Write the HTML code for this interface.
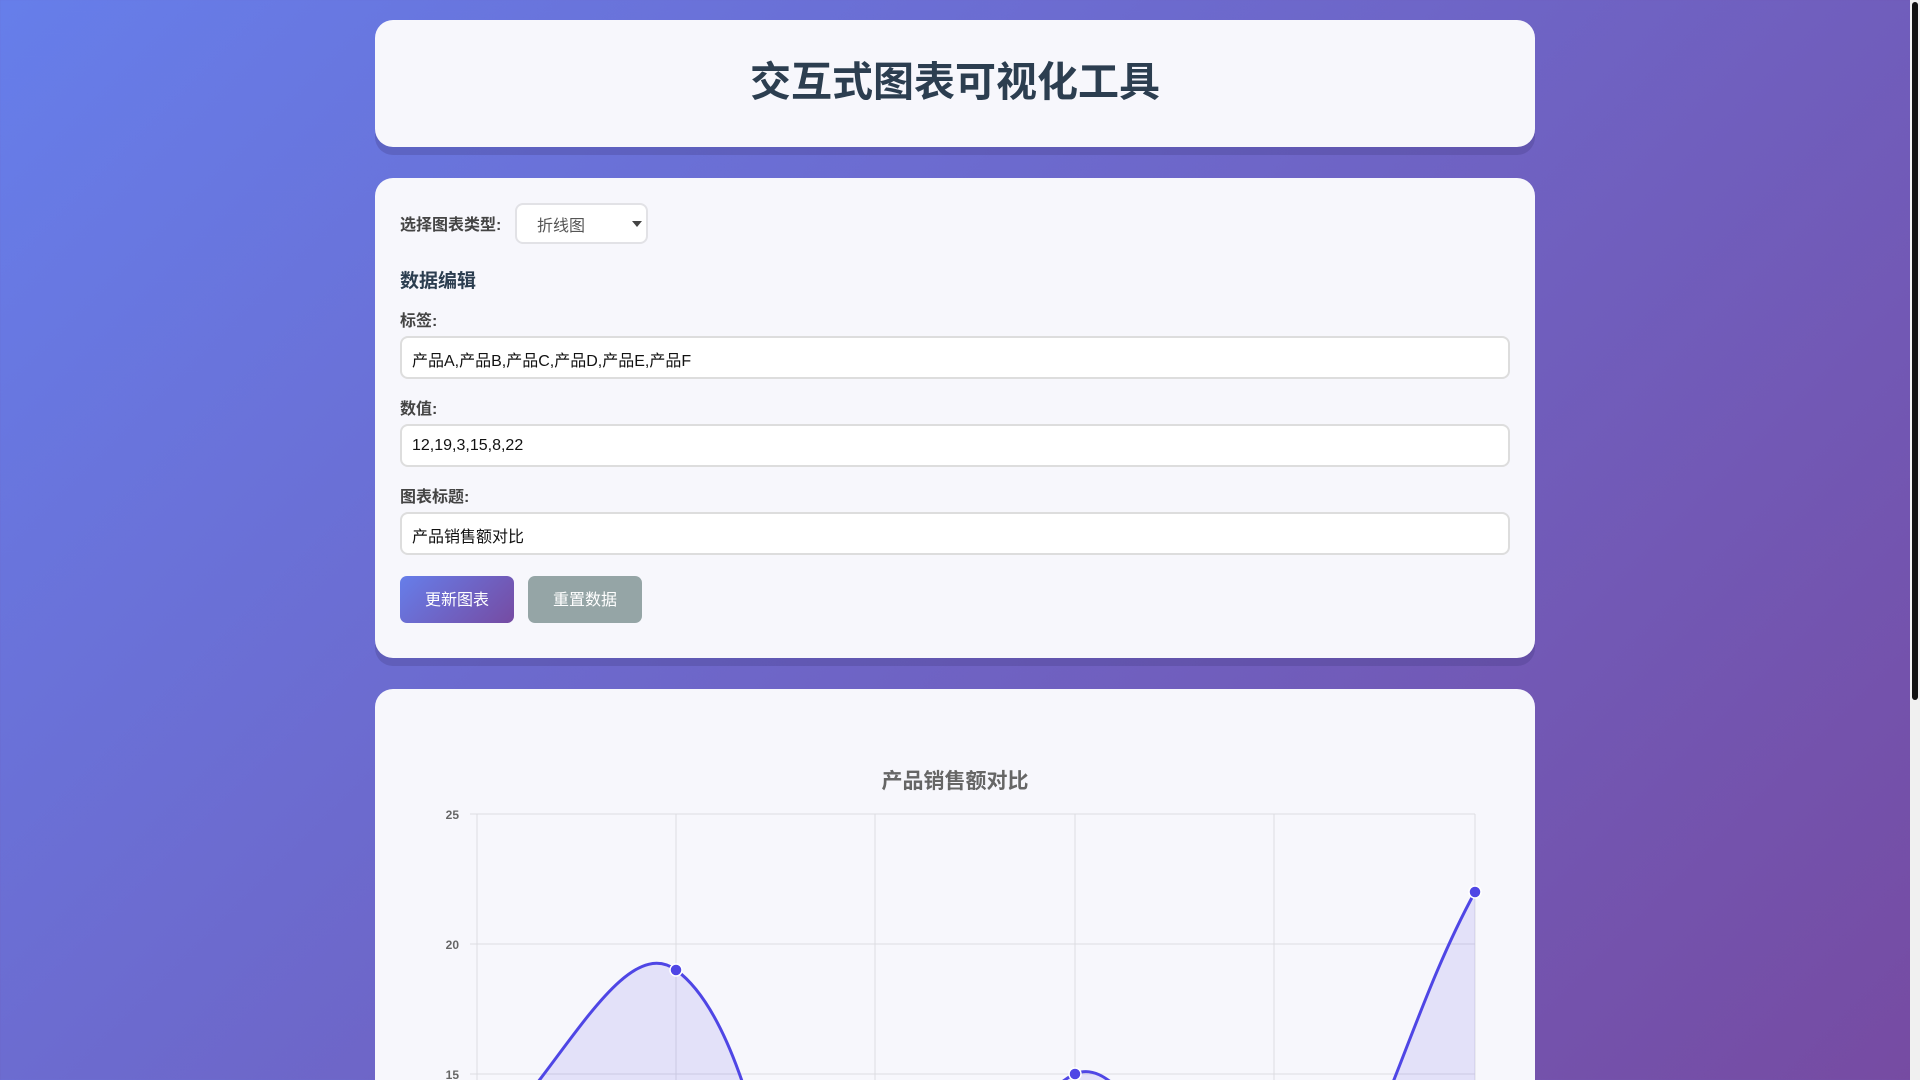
<!DOCTYPE html>
<html lang="zh"><head><meta charset="utf-8">
<style>
*{box-sizing:border-box;margin:0;padding:0}
html,body{width:1920px;height:1080px;overflow:hidden}
body{background:linear-gradient(135deg,#667eea 0%,#764ba2 100%);font-family:"Liberation Sans","Noto Sans CJK SC",sans-serif;position:relative}
.card{position:absolute;left:375px;width:1160px;background:#f7f7fc;border-radius:18px;box-shadow:0 8px 0 rgba(60,50,120,.25)}
.h{top:20px;height:127px;text-align:center}
.h h1{font-size:41px;font-weight:bold;color:#2c3e50;line-height:125px}
.c{top:178px;height:480px}
.lbl{position:absolute;left:25px;font-size:16px;font-weight:bold;color:#444}
.sel{position:absolute;left:140px;top:25px;width:133px;height:41px;border:2px solid #e2e2e6;border-radius:8px;background:#fff;font-size:16px;color:#555;padding:7px 0 0 20px}
.sel:after{content:"";position:absolute;right:4px;top:16px;border:5px solid transparent;border-top:6px solid #444}
.inp{position:absolute;left:25px;width:1110px;height:43px;border:2px solid #ddd;border-radius:8px;background:#fff;font-size:16px;color:#111;padding:9px 0 0 10px}
.btn{position:absolute;top:398px;height:47px;width:114px;border-radius:7px;color:#fff;font-size:16px;text-align:center;line-height:49px}
.ch{top:689px;height:500px}
.scroll{position:absolute;right:0;top:0;width:10px;height:1080px;background:#f0f0f0}
.thumb{position:absolute;right:2px;top:2px;width:6px;height:698px;background:#111;border-radius:3px}
</style></head><body>
<div class="card h"><h1>交互式图表可视化工具</h1></div>
<div class="card c">
<div class="lbl" style="top:33px">选择图表类型:</div>
<div class="sel">折线图</div>
<div class="lbl" style="top:88px;font-size:19px;color:#2c3e50">数据编辑</div>
<div class="lbl" style="top:129px">标签:</div>
<div class="inp" style="top:158px">产品A,产品B,产品C,产品D,产品E,产品F</div>
<div class="lbl" style="top:217px">数值:</div>
<div class="inp" style="top:246px;padding-top:11px">12,19,3,15,8,22</div>
<div class="lbl" style="top:305px">图表标题:</div>
<div class="inp" style="top:334px">产品销售额对比</div>
<div class="btn" style="left:25px;background:linear-gradient(135deg,#667eea,#764ba2)">更新图表</div>
<div class="btn" style="left:153px;background:#95a5a6">重置数据</div>
</div>
<div class="card ch"></div>
<svg style="position:absolute;left:0;top:0" width="1920" height="1080" font-family="Liberation Sans, Noto Sans CJK SC, sans-serif">
<text x="955" y="788" text-anchor="middle" font-size="21" font-weight="bold" fill="#666">产品销售额对比</text>
<g stroke="#dcdce2" stroke-width="1">
<line x1="470" y1="814" x2="1475" y2="814"/><line x1="470" y1="944" x2="1475" y2="944"/><line x1="470" y1="1074" x2="1475" y2="1074"/>
<line x1="477" y1="814" x2="477" y2="1080"/><line x1="676" y1="814" x2="676" y2="1080"/><line x1="875" y1="814" x2="875" y2="1080"/><line x1="1075" y1="814" x2="1075" y2="1080"/><line x1="1274" y1="814" x2="1274" y2="1080"/><line x1="1475" y1="814" x2="1475" y2="1080"/>
</g>
<g font-size="12" font-weight="bold" fill="#666" text-anchor="end">
<text x="459" y="819">25</text><text x="459" y="949">20</text><text x="459" y="1079">15</text>
</g>
<path d="M477,1152 C557,1079 621,930 676,970 C780,1045 787,1415 875,1438 C947,1457 978,1118 1075,1074 C1138,1045 1211,1285 1274,1256 C1371,1212 1395,1038 1475,892 L1475,1200 L477,1200 Z" fill="rgba(90,80,230,0.13)"/>
<path d="M477,1152 C557,1079 621,930 676,970 C780,1045 787,1415 875,1438 C947,1457 978,1118 1075,1074 C1138,1045 1211,1285 1274,1256 C1371,1212 1395,1038 1475,892" fill="none" stroke="#4f46e5" stroke-width="3"/>
<g fill="#4f46e5" stroke="#fff" stroke-width="1.5">
<circle cx="676" cy="970" r="6"/><circle cx="1075" cy="1074" r="6"/><circle cx="1475" cy="892" r="6"/>
</g>
</svg>
<div class="scroll"><div class="thumb"></div></div>
</body></html>
